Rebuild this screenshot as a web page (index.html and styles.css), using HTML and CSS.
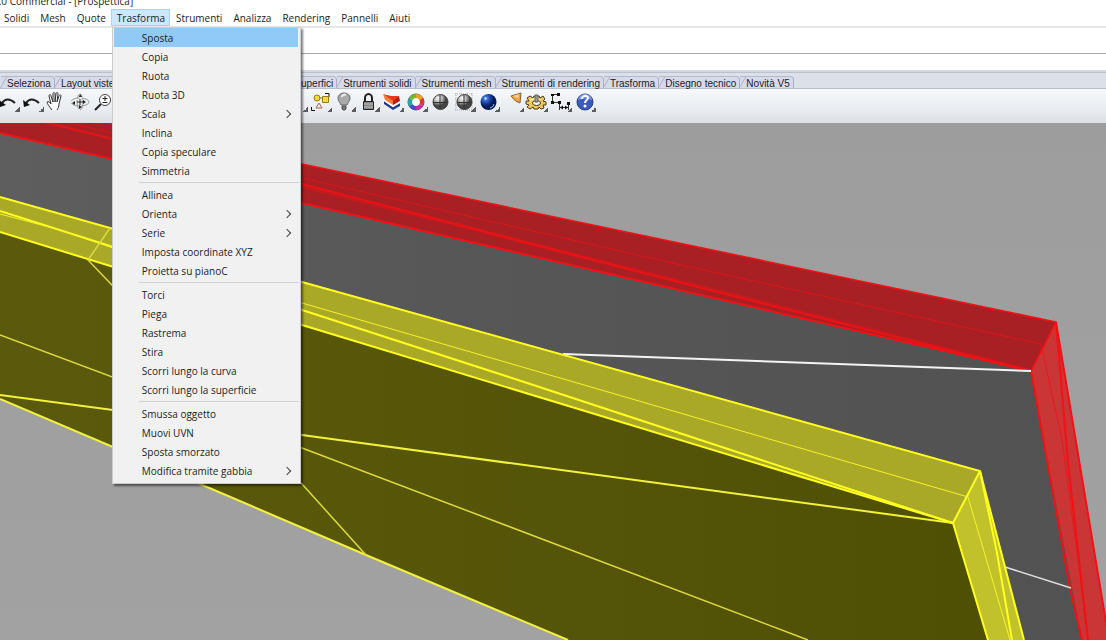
FILE: index.html
```
<!DOCTYPE html>
<html lang="it">
<head>
<meta charset="utf-8">
<title>5.0 Commercial - [Prospettica]</title>
<link rel="stylesheet" href="styles.css">
</head>
<body>
<div class="app">
  <header class="titlebar"><span class="title">5.0 Commercial - [Prospettica]</span></header>

  <nav class="menubar" aria-label="Menu principale">
    <button class="menu">Solidi</button>
    <button class="menu">Mesh</button>
    <button class="menu">Quote</button>
    <div class="menu-open">
      <button class="menu menu-active" aria-expanded="true">Trasforma</button>
      <div class="dropdown" role="menu">
        <button class="item item-selected" role="menuitem">Sposta</button>
        <button class="item" role="menuitem">Copia</button>
        <button class="item" role="menuitem">Ruota</button>
        <button class="item" role="menuitem">Ruota 3D</button>
        <button class="item item-sub" role="menuitem">Scala</button>
        <button class="item" role="menuitem">Inclina</button>
        <button class="item" role="menuitem">Copia speculare</button>
        <button class="item" role="menuitem">Simmetria</button>
        <hr class="separator">
        <button class="item" role="menuitem">Allinea</button>
        <button class="item item-sub" role="menuitem">Orienta</button>
        <button class="item item-sub" role="menuitem">Serie</button>
        <button class="item" role="menuitem">Imposta coordinate XYZ</button>
        <button class="item" role="menuitem">Proietta su pianoC</button>
        <hr class="separator">
        <button class="item" role="menuitem">Torci</button>
        <button class="item" role="menuitem">Piega</button>
        <button class="item" role="menuitem">Rastrema</button>
        <button class="item" role="menuitem">Stira</button>
        <button class="item" role="menuitem">Scorri lungo la curva</button>
        <button class="item" role="menuitem">Scorri lungo la superficie</button>
        <hr class="separator">
        <button class="item" role="menuitem">Smussa oggetto</button>
        <button class="item" role="menuitem">Muovi UVN</button>
        <button class="item" role="menuitem">Sposta smorzato</button>
        <button class="item item-sub" role="menuitem">Modifica tramite gabbia</button>
      </div>
    </div>
    <button class="menu">Strumenti</button>
    <button class="menu">Analizza</button>
    <button class="menu">Rendering</button>
    <button class="menu">Pannelli</button>
    <button class="menu">Aiuti</button>
  </nav>

  <div class="history"></div>
  <input class="command" type="text" aria-label="Comando">

  <div class="tabs">
    <button class="tab">Seleziona</button>
    <button class="tab">Layout viste</button>
    <span class="tab-fill"></span>
    <button class="tab">Superfici</button>
    <button class="tab">Strumenti solidi</button>
    <button class="tab">Strumenti mesh</button>
    <button class="tab">Strumenti di rendering</button>
    <button class="tab">Trasforma</button>
    <button class="tab">Disegno tecnico</button>
    <button class="tab">Novità V5</button>
  </div>

  <div class="toolbar">
    <button class="tool more" aria-label="Annulla"><svg viewBox="0 0 24 24"><path d="M6 12Q11 5 19 12" fill="none" stroke="#222" stroke-width="2"/><path d="M3 9l1 7 6-2z" fill="#111"/></svg></button>
    <button class="tool more" aria-label="Annulla multiplo"><svg viewBox="0 0 24 24"><path d="M6 12Q11 5 19 12" fill="none" stroke="#222" stroke-width="2"/><path d="M3 9l1 7 6-2z" fill="#111"/></svg></button>
    <button class="tool" aria-label="Panoramica"><svg viewBox="0 0 24 24"><path d="M8 19C6 16 3 13 3 11c1-1 3 0 4 2L5 5c0-2 2-2 2 0l2 6V3c0-2 2-2 2 0v8l1-8c0-2 2-2 2 0l-1 8 2-6c1-2 2-1 2 0l-2 8c0 3-1 4-2 6" fill="#fff" stroke="#333"/></svg></button>
    <button class="tool" aria-label="Ruota vista"><svg viewBox="0 0 24 24"><ellipse cx="12" cy="11" rx="9" ry="4" fill="none" stroke="#999" stroke-dasharray="9 2"/><ellipse cx="12" cy="11" rx="3" ry="8" fill="none" stroke="#999" stroke-dasharray="9 2"/><path d="M12 8v6M9 11h6" stroke="#222"/><path d="M12 3l2 3h-3zM11 18l3-2-3-2zM7 10v4l-3-2zM15 9v4l3-2z" fill="#222"/></svg></button>
    <button class="tool" aria-label="Zoom"><svg viewBox="0 0 24 24"><path d="M9 13l-6 6" stroke="#222" stroke-width="2"/><circle cx="13" cy="9" r="5.500" fill="#fff" stroke="#444"/><path d="M13 5v5M10.500 7.500h5M10.500 11.500h5" stroke="#222"/></svg></button>
    <button class="tool more tool-resume" aria-label="Gruppo"><svg viewBox="0 0 24 24"><path d="M7 11h3" stroke="#333"/></svg></button>
    <button class="tool more" aria-label="Raggruppa"><svg viewBox="0 0 24 24"><path d="M17 2.500h4V6M3.500 16v3.500H7" fill="none" stroke="#111" stroke-width="1"/><path d="M9 7h5" stroke="#777"/><circle cx="9" cy="7" r="3" fill="#f5d936" stroke="#947b12"/><path d="M14.500 5.500h6v6h-6z" fill="#f5d936" stroke="#947b12"/><path d="M11 12l3 5H8z" fill="#eee" stroke="#a46a4a"/></svg></button>
    <button class="tool more" aria-label="Visibilità"><svg viewBox="0 0 24 24"><path d="M9 14C8 11 6 10 6 7a6 5 0 0 1 12 0c0 3-2 4-3 7z" fill="#aaa" stroke="#666"/><path d="M10 6c0-2 2-3 4-2" stroke="#eee" stroke-width="2" fill="none"/><path d="M10 15h4v3l-1 1h-2l-1-1z" fill="#777" stroke="#555"/></svg></button>
    <button class="tool more" aria-label="Blocca"><svg viewBox="0 0 24 24"><path d="M9 10V7a3.500 4 0 0 1 7 0v3" fill="none" stroke="#222" stroke-width="2"/><path d="M7.500 10.500h10v8h-10z" fill="#888" stroke="#222"/><path d="M8 13h9M8 16h9" stroke="#bbb"/></svg></button>
    <button class="tool more" aria-label="Livelli"><svg viewBox="0 0 24 24"><path d="M4 10l9 6 7-4v3l-7 4-9-6z" fill="#1d3c8e"/><path d="M4 9l9 6 7-4" fill="none" stroke="#fff" stroke-width="2"/><path d="M3 3l10 6v5L5 9z" fill="#f57f3c"/><path d="M13 9l6-4 1 5-7 4z" fill="#b91c14"/><path d="M3 3l8 2 8 0-6 5z" fill="#e8391d"/></svg></button>
    <button class="tool more" aria-label="Colore"><svg viewBox="0 0 24 24"><circle cx="12" cy="11" r="8" fill="#fff" stroke="#555"/><g fill="none" stroke-width="4"><path d="M12 5A6 6 0 0 1 17.200 8" stroke="#f0a021"/><path d="M17.200 8a6 6 0 0 1 0 6" stroke="#e6362c"/><path d="M17.200 14A6 6 0 0 1 12 17" stroke="#c72da6"/><path d="M12 17A6 6 0 0 1 6.800 14" stroke="#3a55cc"/><path d="M6.800 14a6 6 0 0 1 0-6" stroke="#20a6a6"/><path d="M6.800 8A6 6 0 0 1 12 5" stroke="#72b82a"/></g></svg></button>
    <button class="tool" aria-label="Ombreggiata"><svg viewBox="0 0 24 24"><defs><radialGradient id="silver" cx=".35" cy=".25"><stop stop-color="#fff"/><stop offset=".55" stop-color="#b4b4b4"/><stop offset="1" stop-color="#444"/></radialGradient></defs><circle cx="12.500" cy="11" r="7.500" fill="url(#silver)" stroke="#444"/><path d="M12 4v14M5 11.500h15" stroke="#333"/></svg></button>
    <button class="tool more" aria-label="Ombreggiata con griglia"><svg viewBox="0 0 24 24"><path d="M3 3h18M3 8h18M3 14h18M3 19h18M4 2v18M9 2v18M15 2v18M20 2v18" stroke="#aaa" stroke-dasharray="1 1"/><circle cx="12.500" cy="11" r="7.500" fill="url(#silver)" stroke="#444"/><path d="M12 4v14M5 11.500h15" stroke="#333"/></svg></button>
    <button class="tool more" aria-label="Rendering"><svg viewBox="0 0 24 24"><defs><radialGradient id="blue" cx=".32" cy=".28"><stop stop-color="#e5f1ff"/><stop offset=".25" stop-color="#3d70d4"/><stop offset=".7" stop-color="#123794"/><stop offset="1" stop-color="#051a55"/></radialGradient></defs><circle cx="12.500" cy="11" r="8" fill="url(#blue)"/><path d="M14 17q4-1 4-4" fill="none" stroke="#82baff"/></svg></button>
    <button class="tool more" aria-label="Faretto"><svg viewBox="0 0 24 24"><path d="M11 5l10-3-1 10q-5-1-9-7z" fill="#f0a546" stroke="#8b602c"/><path d="M13 5l6-2-1 4z" fill="#ffd58b"/></svg></button>
    <button class="tool more" aria-label="Opzioni"><svg viewBox="0 0 24 24"><path d="M10 5h5l1 2 3-2 2 3-2 2 3 1v3l-3 0 1 3-3 1-2-2-1 2h-4l-1-2-3 2-3-2 2-2-3-1v-3l3 0-2-3 3-2 3 2z" fill="#edc65c" stroke="#4b3b16"/><path d="M6 9l4-1 6 1" stroke="#fff0a3" stroke-width="2" fill="none"/><ellipse cx="12.500" cy="12" rx="4" ry="2.500" fill="#f5f5f5" stroke="#4b3b16"/><path d="M11 4v7h3V4z" fill="#999" stroke="#666"/></svg></button>
    <button class="tool more" aria-label="Quote"><svg viewBox="0 0 24 24"><path d="M4.500 3v8M3 3.500h9M3 11.500h8.500V19M12 16.500h8M20.500 12v7" fill="none" stroke="#333"/><path d="M3 3h3v2H3zM9 2h3v3H9zM3 10h3v3H3zM10 10h3v3h-3zM19 11h3v3h-3zM12 16.500l3-2v4zM20 16.500l-3-2v4z" fill="#111"/></svg></button>
    <button class="tool more" aria-label="Guida"><svg viewBox="0 0 24 24"><circle cx="13" cy="11" r="8" fill="#395bbd" stroke="#263b86"/><path d="M6 9a7 6 0 0 1 14 0q-7-3-14 0z" fill="#7d9be5"/><path d="M10 8c0-4 6-4 6-1 0 2-3 2-3 5" fill="none" stroke="#fff" stroke-width="2"/><circle cx="13" cy="15" r="1.500" fill="#fff"/></svg></button>
  </div>

  <main class="viewport">
    <svg class="scene" viewBox="0 123 1106 517" preserveAspectRatio="xMinYMin slice" role="img" aria-label="Vista prospettica">
      <defs><linearGradient id="wall"><stop stop-color="#5e5e5e"/><stop offset=".4" stop-color="#575757"/><stop offset="1" stop-color="#525252"/></linearGradient>
      <linearGradient id="olive"><stop stop-color="#5b5a0c"/><stop offset="1" stop-color="#505005"/></linearGradient></defs>
      <path d="M0 133L1031 371 1083 640H568L366 555 200 484 0 399z" fill="url(#wall)"/>
      <path d="M0 100L302 164 1056 322 1031 371 302 203 0 133z" fill="#a92024"/>
      <path d="M1056 322L1031 371 1082 640H1109z" fill="#ca3535"/>
      <g fill="none" stroke="#f31115">
        <path d="M0 100L302 164 1056 322 1031 371" stroke-width="1.500"/>
        <path d="M1031 371L302 203 0 133" stroke-width="2"/>
        <path d="M40 121L113 139 302 184 690 285 1031 371" stroke-width="2" opacity=".8"/>
        <path d="M70 123L302 178 690 267 1041 344" opacity=".65"/>
        <path d="M302 186L690 284 1031 371" stroke-width="4" opacity=".35"/>
        <path d="M1031 371L1070 588 1082 640" stroke-width="2"/>
        <path d="M1056 322L1109 640M1056 322L1068 463 1088 640" stroke-width="2"/>
        <path d="M1041 344L1062 440 1082 590 1088 640" opacity=".8"/>
      </g>
      <path d="M563 354L1031 371" stroke="#f4f4f4" stroke-width="2"/>
      <path d="M1005 567L1071 588" stroke="#ddd" stroke-width="1.500"/>
      <path d="M0 232L953 523 988 640H568L366 555 200 484 0 399z" fill="url(#olive)"/>
      <path d="M0 197L302 282 980 471 953 523 302 325 0 232z" fill="#a9a827"/>
      <path d="M980 471L953 523 988 640H1024z" fill="#c1c12c"/>
      <g fill="none" stroke="#f4f42a">
        <path d="M0 197L302 282 980 471 1024 640M0 232L302 325 953 523 988 640M953 523L980 471" stroke="#ffff20" stroke-width="2"/>
        <path d="M0 399L200 484 366 555 568 640M0 395L302 435 953 523" stroke="#f2f23c" stroke-width="2"/>
        <path d="M0 211L113 247 302 310 515 379 953 523M980 471L997 553 1012 640" stroke="#ffff20" stroke-width="2"/>
        <path d="M0 214L60 230 113 248 302 303 567 380 968 497 1010 640"/>
        <path d="M110 228L88 260 302 484 366 555M0 335L302 448 808 640" stroke="#dcda40" stroke-width="1.500"/>
      </g>
    </svg>
  </main>
</div>
</body>
</html>
```
FILE: styles.css
```
* { box-sizing: border-box; }

body {
  margin: 0;
  background: #fff;
  color: #1c1c1c;
  font-family: "Open Sans", "Noto Sans", sans-serif;
  font-size: 10px;
}

button {
  margin: 0;
  padding: 0;
  border: 0;
  background: none;
  color: inherit;
  font: inherit;
  white-space: nowrap;
}

.app {
  display: flex;
  flex-direction: column;
  height: 100vh;
  overflow: hidden;
}

.titlebar {
  display: flex;
  align-items: flex-end;
  height: 9px;
  overflow: hidden;
}

.title {
  margin-left: -7px;
  line-height: 16px;
  white-space: nowrap;
}

.menubar {
  display: flex;
  height: 19px;
  margin-left: -2px;
  border-bottom: 2px solid #e6e6e6;
}

.menu {
  height: 17px;
  padding: 1px 5px 0 6px;
  line-height: 16px;
}

.menu-open { position: relative; }

.menu-active {
  background: #cce8ff;
  box-shadow: inset 0 0 0 1px #a5d3f3;
}

.dropdown {
  position: absolute;
  z-index: 2;
  top: 18px;
  left: 1px;
  display: flex;
  flex-direction: column;
  width: 189px;
  padding: 0 2px 3px 1px;
  border: 1px solid #ccc;
  background: #f1f1f1;
  box-shadow: 2px 2px 2px rgba(0, 0, 0, .5);
}

.item {
  display: flex;
  align-items: center;
  justify-content: space-between;
  height: 19px;
  padding: 0 8px 0 28px;
}

.item-selected { background: #91c9f7; }

.item-sub::after {
  width: 5px;
  height: 5px;
  border: solid #444;
  border-width: 1px 1px 0 0;
  content: "";
  transform: rotate(45deg);
}

.separator {
  width: 160px;
  height: 1px;
  margin: 2px 0 2px 25px;
  border: 0;
  background: #d2d2d2;
}

.history {
  height: 26px;
  border-bottom: 1px solid #a8a8a8;
}

.command {
  height: 16px;
  padding: 0 4px;
  border: 0;
  outline: 0;
  background: #fff;
  font: inherit;
}

.tabs {
  display: flex;
  align-items: flex-end;
  height: 19px;
  padding-left: 1px;
  border-bottom: 1px solid #b8bfcc;
  background: linear-gradient(#d5dae2 0 2px, #bbc2ce 2px 3px, #dce1e9 3px);
  font-family: "Liberation Sans", Arial, sans-serif;
}

.tab {
  position: relative;
  height: 12px;
  padding: 1px 3px 0 6px;
  border-top: 1px solid #b4b9cb;
  border-right: 1px solid #a9afc4;
  border-radius: 0 4px 0 0;
  background: #d7dbe9;
  line-height: 11px;
}

.tab::before {
  position: absolute;
  top: 0;
  bottom: 0;
  left: 2px;
  border-left: 1px solid #a9afc4;
  content: "";
  transform: skewX(-30deg);
}

.tab-fill { width: 170px; }

.toolbar {
  display: grid;
  grid-template-columns: repeat(25, 24px);
  align-items: start;
  height: 34px;
  margin-left: -4px;
  padding-top: 2px;
  background: linear-gradient(#f6f8fa, #e9ecf0 60%, #dcdfe4);
}

.tool {
  position: relative;
  height: 24px;
}

.tool svg {
  display: block;
  width: 24px;
  height: 24px;
}

.tool-resume { grid-column-start: 13; }

.more::after {
  position: absolute;
  right: 0;
  bottom: 3px;
  width: 5px;
  height: 5px;
  background: linear-gradient(135deg, transparent 50%, #5c5c5c 50%);
  content: "";
}

.viewport {
  flex: 1;
  min-height: 0;
  background: linear-gradient(#9d9d9d, #a2a2a2);
}

.scene {
  display: block;
  width: 100%;
  height: 100%;
}
```
